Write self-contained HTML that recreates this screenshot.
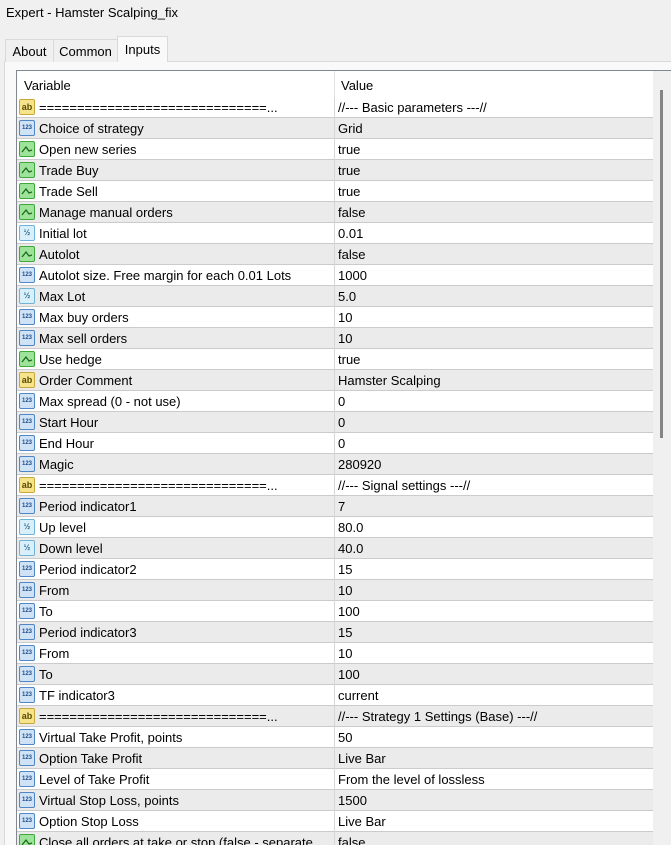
<!DOCTYPE html>
<html><head><meta charset="utf-8"><style>
*{margin:0;padding:0;box-sizing:border-box}
html,body{width:671px;height:845px;overflow:hidden}
body{background:#f0f0f0;font-family:"Liberation Sans","Noto Sans CJK SC",sans-serif;font-size:13px;color:#000;position:relative}
.title{position:absolute;left:6px;top:5px;font-size:13px}
.tab{position:absolute;top:39px;height:23px;border:1px solid #d9d9d9;border-bottom:none;background:#f0f0f0;padding:4px 0 0;text-align:center;font-size:13px}
.tab.act{top:36px;height:26px;background:#f9f9f9;padding-top:5px;z-index:2}
.panel{position:absolute;left:4px;top:61px;width:680px;height:800px;background:#f9f9f9;border:1px solid #d9d9d9}
.tbl{position:absolute;left:16px;top:70px;width:660px;height:780px;background:#fff;border:1px solid #828790;overflow:hidden}
.hdr{position:absolute;left:0;top:0;width:636px;height:26px;background:#fff}
.hdr span{position:absolute;top:7px}
.rows{position:absolute;left:0;top:26px;width:636px}
.r{height:21px;border-bottom:1px solid #cbcbcb;position:relative;white-space:nowrap}
.r:nth-child(even){background:#ebebeb}
.r .n{position:absolute;left:22px;top:3px}
.r .v{position:absolute;left:321px;top:3px}
.r::after{content:"";position:absolute;left:317px;top:0;width:1px;height:21px;background:#d6d6d6}
.hdr::after{content:"";position:absolute;left:317px;top:0;width:1px;height:26px;background:#e4e4e4}
.i{position:absolute;left:2px;top:2px;width:16px;height:16px;border-radius:2px;font-size:7px;font-weight:bold;text-align:center;line-height:14px}
.ab{background:#f6e48c;border:1px solid #c9a83a;color:#5a4a00;font-size:9px}
.nm{background:#cfe2f6;border:1px solid #4f86c6;color:#1f4e8c;font-size:6px}
.bo{background:#9ee39a;border:1px solid #3ea83a}
.fr{background:#d9f0fa;border:1px solid #6fb4d6;color:#2a6a96;font-size:8px}
.sb{position:absolute;left:636px;top:0;width:20px;height:800px;background:#f0f0f0}
.th{position:absolute;left:7px;top:19px;width:3px;height:348px;background:#858585}
</style></head><body>
<div class="title">Expert - Hamster Scalping_fix</div>
<div class="panel"></div>
<div class="tab" style="left:5px;width:49px">About</div>
<div class="tab" style="left:53px;width:65px">Common</div>
<div class="tab act" style="left:117px;width:51px">Inputs</div>
<div class="tbl">
<div class="hdr"><span style="left:7px">Variable</span><span style="left:324px">Value</span></div>
<div class="rows">
<div class="r"><span class="i ab">ab</span><span class="n">==============================...</span><span class="v">//--- Basic parameters ---//</span></div>
<div class="r"><span class="i nm">123</span><span class="n">Choice of strategy</span><span class="v">Grid</span></div>
<div class="r"><span class="i bo"><svg width="14" height="14"><path d="M2 10 L6 5 L9 9 L12 8" stroke="#1a6a1a" fill="none" stroke-width="1.3"/></svg></span><span class="n">Open new series</span><span class="v">true</span></div>
<div class="r"><span class="i bo"><svg width="14" height="14"><path d="M2 10 L6 5 L9 9 L12 8" stroke="#1a6a1a" fill="none" stroke-width="1.3"/></svg></span><span class="n">Trade Buy</span><span class="v">true</span></div>
<div class="r"><span class="i bo"><svg width="14" height="14"><path d="M2 10 L6 5 L9 9 L12 8" stroke="#1a6a1a" fill="none" stroke-width="1.3"/></svg></span><span class="n">Trade Sell</span><span class="v">true</span></div>
<div class="r"><span class="i bo"><svg width="14" height="14"><path d="M2 10 L6 5 L9 9 L12 8" stroke="#1a6a1a" fill="none" stroke-width="1.3"/></svg></span><span class="n">Manage manual orders</span><span class="v">false</span></div>
<div class="r"><span class="i fr">½</span><span class="n">Initial lot</span><span class="v">0.01</span></div>
<div class="r"><span class="i bo"><svg width="14" height="14"><path d="M2 10 L6 5 L9 9 L12 8" stroke="#1a6a1a" fill="none" stroke-width="1.3"/></svg></span><span class="n">Autolot</span><span class="v">false</span></div>
<div class="r"><span class="i nm">123</span><span class="n">Autolot size. Free margin for each 0.01 Lots</span><span class="v">1000</span></div>
<div class="r"><span class="i fr">½</span><span class="n">Max Lot</span><span class="v">5.0</span></div>
<div class="r"><span class="i nm">123</span><span class="n">Max buy orders</span><span class="v">10</span></div>
<div class="r"><span class="i nm">123</span><span class="n">Max sell orders</span><span class="v">10</span></div>
<div class="r"><span class="i bo"><svg width="14" height="14"><path d="M2 10 L6 5 L9 9 L12 8" stroke="#1a6a1a" fill="none" stroke-width="1.3"/></svg></span><span class="n">Use hedge</span><span class="v">true</span></div>
<div class="r"><span class="i ab">ab</span><span class="n">Order Comment</span><span class="v">Hamster Scalping</span></div>
<div class="r"><span class="i nm">123</span><span class="n">Max spread (0 - not use)</span><span class="v">0</span></div>
<div class="r"><span class="i nm">123</span><span class="n">Start Hour</span><span class="v">0</span></div>
<div class="r"><span class="i nm">123</span><span class="n">End Hour</span><span class="v">0</span></div>
<div class="r"><span class="i nm">123</span><span class="n">Magic</span><span class="v">280920</span></div>
<div class="r"><span class="i ab">ab</span><span class="n">==============================...</span><span class="v">//--- Signal settings ---//</span></div>
<div class="r"><span class="i nm">123</span><span class="n">Period indicator1</span><span class="v">7</span></div>
<div class="r"><span class="i fr">½</span><span class="n">Up level</span><span class="v">80.0</span></div>
<div class="r"><span class="i fr">½</span><span class="n">Down level</span><span class="v">40.0</span></div>
<div class="r"><span class="i nm">123</span><span class="n">Period indicator2</span><span class="v">15</span></div>
<div class="r"><span class="i nm">123</span><span class="n">From</span><span class="v">10</span></div>
<div class="r"><span class="i nm">123</span><span class="n">To</span><span class="v">100</span></div>
<div class="r"><span class="i nm">123</span><span class="n">Period indicator3</span><span class="v">15</span></div>
<div class="r"><span class="i nm">123</span><span class="n">From</span><span class="v">10</span></div>
<div class="r"><span class="i nm">123</span><span class="n">To</span><span class="v">100</span></div>
<div class="r"><span class="i nm">123</span><span class="n">TF indicator3</span><span class="v">current</span></div>
<div class="r"><span class="i ab">ab</span><span class="n">==============================...</span><span class="v">//--- Strategy 1 Settings (Base) ---//</span></div>
<div class="r"><span class="i nm">123</span><span class="n">Virtual Take Profit, points</span><span class="v">50</span></div>
<div class="r"><span class="i nm">123</span><span class="n">Option Take Profit</span><span class="v">Live Bar</span></div>
<div class="r"><span class="i nm">123</span><span class="n">Level of Take Profit</span><span class="v">From the level of lossless</span></div>
<div class="r"><span class="i nm">123</span><span class="n">Virtual Stop Loss, points</span><span class="v">1500</span></div>
<div class="r"><span class="i nm">123</span><span class="n">Option Stop Loss</span><span class="v">Live Bar</span></div>
<div class="r"><span class="i bo"><svg width="14" height="14"><path d="M2 10 L6 5 L9 9 L12 8" stroke="#1a6a1a" fill="none" stroke-width="1.3"/></svg></span><span class="n">Close all orders at take or stop (false - separate</span><span class="v">false</span></div>
</div>
<div class="sb"><div class="th"></div></div>
</div>
</body></html>
